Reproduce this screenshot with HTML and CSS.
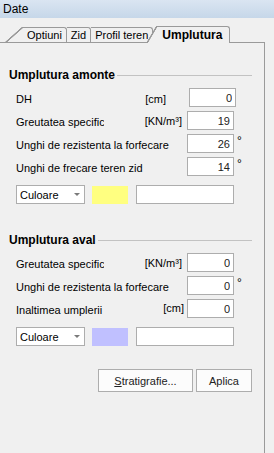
FILE: index.html
```html
<!DOCTYPE html>
<html>
<head>
    <title>Date</title>
    <link rel="stylesheet" href="styles.css">
</head>
<body>
    <div class="titlebar">Date</div>

    <div class="window">
        <div class="tabs">
            <div class="tab first">Optiuni</div>
            <div class="tab">Zid</div>
            <div class="tab">Profil teren</div>
            <div class="tab active">Umplutura</div>
        </div>

        <div class="panel">
            <div class="group">
                <div class="legend">Umplutura amonte</div>
                <div class="fields">
                    <div class="row">
                        <span class="lbl">DH</span>
                        <span class="unit wide">[cm]</span>
                        <input class="num nudge" type="text" value="0">
                    </div>
                    <div class="row">
                        <span class="lbl clip">Greutatea specifica</span>
                        <span class="unit">[KN/m³]</span>
                        <input class="num" type="text" value="19">
                    </div>
                    <div class="row">
                        <span class="lbl">Unghi de rezistenta la forfecare</span>
                        <input class="num" type="text" value="26">
                        <span class="deg">°</span>
                    </div>
                    <div class="row">
                        <span class="lbl">Unghi de frecare teren zid</span>
                        <input class="num" type="text" value="14">
                        <span class="deg">°</span>
                    </div>
                    <div class="color-row">
                        <div class="combo"><span>Culoare</span><span class="arrow"></span></div>
                        <div class="swatch yellow"></div>
                        <input class="txt" type="text" value="">
                    </div>
                </div>
            </div>

            <div class="group">
                <div class="legend">Umplutura aval</div>
                <div class="fields">
                    <div class="row">
                        <span class="lbl clip">Greutatea specifica</span>
                        <span class="unit">[KN/m³]</span>
                        <input class="num" type="text" value="0">
                    </div>
                    <div class="row">
                        <span class="lbl">Unghi de rezistenta la forfecare</span>
                        <input class="num" type="text" value="0">
                        <span class="deg">°</span>
                    </div>
                    <div class="row">
                        <span class="lbl">Inaltimea umplerii</span>
                        <span class="unit tight">[cm]</span>
                        <input class="num" type="text" value="0">
                    </div>
                    <div class="color-row">
                        <div class="combo"><span>Culoare</span><span class="arrow"></span></div>
                        <div class="swatch lavender"></div>
                        <input class="txt" type="text" value="">
                    </div>
                </div>
            </div>

            <div class="actions">
                <button class="btn wide"><u>S</u>tratigrafie...</button>
                <button class="btn">Aplica</button>
            </div>
        </div>
    </div>
</body>
</html>
```

FILE: styles.css
```css
body {
    margin: 0;
    width: 274px;
    height: 453px;
    overflow: hidden;
    background: #f0f0f0;
    font-family: "Liberation Sans", Arial, sans-serif;
    font-size: 11px;
    color: #000;
}
.titlebar {
    height: 18px;
    line-height: 18px;
    padding-left: 3px;
    font-size: 12px;
    background: linear-gradient(#dae5f2, #c6d7e9);
}
.window {
    width: 265px;
}
.tabs {
    display: flex;
    align-items: flex-end;
    height: 24px;
    padding-left: 23px;
    border-bottom: 1px solid #9a9a9a;
}
.tab {
    position: relative;
    height: 14px;
    line-height: 14px;
    padding: 0 4px;
    border: 1px solid #9a9a9a;
    border-left: none;
    border-bottom: none;
    border-top-right-radius: 3px;
}
.tab.first::before {
    content: "";
    position: absolute;
    left: -18px;
    top: -1px;
    width: 18px;
    height: 16px;
    background: linear-gradient(to bottom right, transparent calc(50% - 1px), #9a9a9a calc(50% - 0.5px), #9a9a9a calc(50% + 0.5px), transparent calc(50% + 1px));
}
.tab.active {
    z-index: 1;
    height: 16px;
    line-height: 16px;
    margin-left: 4px;
    margin-bottom: -1px;
    padding: 0 7px 0 5px;
    background: #f0f0f0;
    font-size: 12px;
    font-weight: bold;
}
.tab.active::before {
    content: "";
    position: absolute;
    left: -10px;
    top: -1px;
    width: 10px;
    height: 17px;
    background: linear-gradient(to bottom right, transparent calc(50% - 1px), #9a9a9a calc(50% - 0.5px), #9a9a9a calc(50% + 0.5px), #f0f0f0 calc(50% + 1px));
}
.panel {
    height: 410px;
    box-sizing: border-box;
    padding: 25px 12px 0 9px;
    border-right: 1px solid #9a9a9a;
}
.legend {
    display: flex;
    align-items: center;
    line-height: 14px;
    font-size: 12px;
    font-weight: bold;
}
.legend::after {
    content: "";
    flex: 1;
    margin-left: 2px;
    border-top: 1px solid #c2c2c2;
}
.group + .group {
    margin-top: 29px;
}
.fields {
    display: flex;
    flex-direction: column;
    gap: 4px;
    margin-top: 6px;
    padding-left: 7px;
}
.row {
    display: grid;
    grid-template-columns: 1fr auto 47px 18px;
    align-items: center;
    height: 19px;
}
.lbl {
    grid-column: 1;
    white-space: nowrap;
    padding-top: 2px;
}
.lbl.clip {
    width: 88px;
    overflow: hidden;
}
.unit {
    grid-column: 2;
    margin-right: 5px;
    padding-top: 1px;
}
.unit.wide {
    margin-right: 21px;
    padding-top: 3px;
}
.unit.tight {
    margin-right: 3px;
    padding-top: 0;
    margin-top: -2px;
}
.num, .txt {
    height: 19px;
    box-sizing: border-box;
    border: 1px solid #adadad;
    background: #fff;
    font: inherit;
    color: #222;
    outline: none;
}
.num {
    grid-column: 3;
    width: 47px;
    padding: 0 3px;
    text-align: right;
}
.num.nudge {
    margin-left: 2px;
    margin-right: -2px;
}
.deg {
    grid-column: 4;
    align-self: start;
    line-height: 11px;
    margin-top: 2px;
    padding-left: 3px;
    font-size: 12px;
}
.color-row {
    display: flex;
    align-items: center;
    height: 19px;
    margin-top: 5px;
}
.combo {
    width: 69px;
    height: 19px;
    box-sizing: border-box;
    display: flex;
    align-items: center;
    justify-content: space-between;
    padding: 0 4px 0 3px;
    border: 1px solid #adadad;
    background: #fff;
}
.arrow {
    border-left: 3px solid transparent;
    border-right: 3px solid transparent;
    border-top: 3px solid #7a7a7a;
}
.swatch {
    width: 36px;
    height: 18px;
    margin-left: 7px;
}
.swatch.yellow {
    background: #ffff80;
}
.swatch.lavender {
    background: #c0c0ff;
}
.txt {
    width: 98px;
    margin-left: 8px;
    padding: 0 3px;
}
.actions {
    display: flex;
    justify-content: flex-end;
    gap: 3px;
    margin-top: 23px;
}
.btn {
    width: 56px;
    height: 23px;
    padding: 0;
    border: 1px solid #adadad;
    background: #fcfcfc;
    font: inherit;
    color: #222;
}
.btn.wide {
    width: 95px;
}
```
